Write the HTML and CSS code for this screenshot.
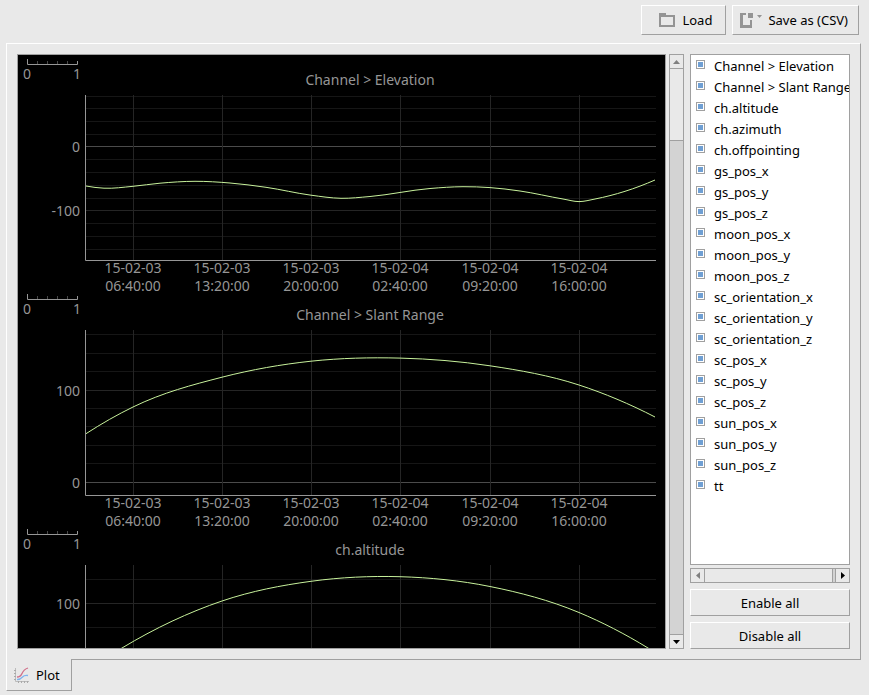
FILE: index.html
```html
<!DOCTYPE html>
<html lang="en">
<head>
  <meta charset="UTF-8">
  <title>Plot</title>
  <link rel="stylesheet" href="styles.css">
</head>
<body>

  <div class="toolbar">
    <button class="btn" type="button">
      <svg class="icon" width="16" height="16" viewBox="0 0 16 16">
        <path d="M0 1h7v2h9v12H0zM2 5v8h12V5z" fill="#949494" fill-rule="evenodd"/>
      </svg>
      Load
    </button>
    <button class="btn btn-save" type="button">
      <svg class="icon" width="22" height="16" viewBox="0 0 22 16">
        <path d="M0 1h6v2H3v10h7V8h2v8H0z" fill="#949494"/>
        <path d="M8 1h5v5H8z" fill="#949494"/>
        <path d="M17 3h5l-2.500 3z" fill="#949494"/>
      </svg>
      Save as (CSV)
    </button>
  </div>

  <div class="panel">
    <div class="plots" id="plots"></div>

    <div class="scroll scroll-v">
      <button class="arrow" type="button" aria-label="Scroll up"><svg width="7" height="4" viewBox="0 0 7 4"><path d="M0 4L3.500 0L7 4z" fill="#808080"/></svg></button>
      <div class="thumb"></div>
      <button class="arrow" type="button" aria-label="Scroll down"><svg width="7" height="4" viewBox="0 0 7 4"><path d="M0 0h7L3.500 4z" fill="#000"/></svg></button>
    </div>

    <div class="side">
      <div class="channels">
        <label class="channel"><input type="checkbox" checked>Channel &gt; Elevation</label>
        <label class="channel"><input type="checkbox" checked>Channel &gt; Slant Range</label>
        <label class="channel"><input type="checkbox" checked>ch.altitude</label>
        <label class="channel"><input type="checkbox" checked>ch.azimuth</label>
        <label class="channel"><input type="checkbox" checked>ch.offpointing</label>
        <label class="channel"><input type="checkbox" checked>gs_pos_x</label>
        <label class="channel"><input type="checkbox" checked>gs_pos_y</label>
        <label class="channel"><input type="checkbox" checked>gs_pos_z</label>
        <label class="channel"><input type="checkbox" checked>moon_pos_x</label>
        <label class="channel"><input type="checkbox" checked>moon_pos_y</label>
        <label class="channel"><input type="checkbox" checked>moon_pos_z</label>
        <label class="channel"><input type="checkbox" checked>sc_orientation_x</label>
        <label class="channel"><input type="checkbox" checked>sc_orientation_y</label>
        <label class="channel"><input type="checkbox" checked>sc_orientation_z</label>
        <label class="channel"><input type="checkbox" checked>sc_pos_x</label>
        <label class="channel"><input type="checkbox" checked>sc_pos_y</label>
        <label class="channel"><input type="checkbox" checked>sc_pos_z</label>
        <label class="channel"><input type="checkbox" checked>sun_pos_x</label>
        <label class="channel"><input type="checkbox" checked>sun_pos_y</label>
        <label class="channel"><input type="checkbox" checked>sun_pos_z</label>
        <label class="channel"><input type="checkbox" checked>tt</label>
      </div>
      <div class="scroll scroll-h">
        <button class="arrow" type="button" aria-label="Scroll left"><svg width="4" height="7" viewBox="0 0 4 7"><path d="M4 0v7L0 3.500z" fill="#808080"/></svg></button>
        <div class="thumb"></div>
        <button class="arrow" type="button" aria-label="Scroll right"><svg width="4" height="7" viewBox="0 0 4 7"><path d="M0 0v7l4-3.500z" fill="#000"/></svg></button>
      </div>
      <button class="btn btn-all" type="button" id="enableAll">Enable all</button>
      <button class="btn btn-all" type="button" id="disableAll">Disable all</button>
    </div>
  </div>

  <div class="tabs">
    <button class="tab" type="button">
      <svg width="16" height="16" viewBox="0 0 16 16" fill="none">
        <path d="M1.500 1v13.500H15" stroke="#bbb"/>
        <path d="M0 3.500h2M0 6.500h2M0 9.500h2M0 12.500h2M4.500 14v2M7.500 14v2M10.500 14v2M13.500 14v2" stroke="#aaa"/>
        <path d="M3 10c3 0 4-1 5-3.500s3-4.500 6-5.500" stroke="#d0708a" stroke-width="1.300"/>
        <path d="M3 12.500c3 .2 4-.8 5.500-2.500s3-2 5.500-1.500" stroke="#80b4ee" stroke-width="1.300"/>
      </svg>
      Plot
    </button>
  </div>

  <script src="script.js"></script>
</body>
</html>
```

FILE: styles.css
```css
* { box-sizing: border-box; margin: 0; padding: 0; }
body {
  height: 100vh;
  display: flex;
  flex-direction: column;
  padding: 5px 8px 4px 6px;
  background: #e9e9e9;
  color: #000;
  font-family: "Noto Sans", sans-serif;
  font-size: 13px;
}
button, input {
  font: inherit;
  color: inherit;
}
.toolbar {
  display: flex;
  justify-content: flex-end;
  gap: 6px;
  padding-right: 2px;
  margin-bottom: 8px;
}
.btn {
  display: flex;
  align-items: center;
  justify-content: center;
  gap: 7px;
  height: 30px;
  padding: 0 13px 0 17px;
  background: #e9e9e9;
  border: 1px solid #a0a0a0;
  border-top-color: #fff;
  border-left-color: #fff;
}
.btn-save {
  gap: 6px;
  padding: 0 10px 0 7px;
}
.btn-all {
  height: 27px;
  margin-top: 6px;
  padding: 0;
}
.panel {
  flex: 1;
  min-height: 0;
  display: flex;
  padding: 10px;
  border: 1px solid #a0a0a0;
  border-top-color: #fff;
  border-left-color: #fff;
}

/* plots */
.plots {
  flex: 1;
  min-width: 0;
  overflow: hidden;
  background: #000;
  border: 1px solid #a0a0a0;
}
.chart {
  display: block;
  width: 100%;
  height: auto;
  fill: none;
  stroke-width: 1;
}
.chart text {
  fill: #969696;
  font-size: 14px;
}
.chart .mid { text-anchor: middle; }
.chart .end { text-anchor: end; }
.axis { stroke: #969696; }
.tick { stroke: #484848; }
.minor { stroke: #161616; }
.major { stroke: #252525; }
.zero { stroke: #4b4b4b; }
.curve { stroke: #c8f29c; }

/* scrollbars */
.scroll {
  display: flex;
  background: #d3d3d3;
  border: 1px solid #a0a0a0;
}
.scroll-v {
  flex-direction: column;
  justify-content: space-between;
  width: 15px;
  margin: 0 6px 0 3px;
}
.scroll-h {
  height: 15px;
  margin-top: 3px;
}
.arrow {
  flex: none;
  width: 13px;
  height: 13px;
  display: flex;
  align-items: center;
  justify-content: center;
  background: #e9e9e9;
  border: 0;
}
.thumb {
  background: #e9e9e9;
  border: 0 solid #a0a0a0;
}
.scroll-v .thumb {
  height: 73px;
  margin-bottom: auto;
  border-width: 1px 0;
}
.scroll-v .arrow:last-child { border-top: 1px solid #a0a0a0; height: 14px; }
.scroll-h .thumb {
  flex: 1;
  margin-right: 2px;
  border-width: 0 1px;
}
.scroll-h .arrow:last-child { border-left: 1px solid #a0a0a0; width: 14px; }

/* channel list */
.side {
  width: 160px;
  display: flex;
  flex-direction: column;
}
.channels {
  flex: 1;
  min-height: 0;
  overflow: hidden;
  background: #fff;
  border: 1px solid #a0a0a0;
}
.channel {
  display: flex;
  gap: 9px;
  height: 21px;
  padding-left: 5px;
  line-height: 22px;
  white-space: nowrap;
}
.channel input {
  appearance: none;
  flex: none;
  width: 9px;
  height: 9px;
  margin-top: 5px;
  background: #fff;
  border: 1px solid #a0a0a0;
}
.channel input:checked {
  padding: 1px;
  background: #6f9fd3 content-box;
}

/* bottom tabs */
.tabs {
  display: flex;
  margin-top: -1px;
}
.tab {
  position: relative;
  display: flex;
  align-items: center;
  gap: 6px;
  height: 32px;
  padding: 0 11px 0 7px;
  background: #e9e9e9;
  border: 1px solid #a0a0a0;
  border-top: 0;
  border-left-color: #fff;
}
```

FILE: script.js
```js
const xTicks = [
  [115.5, '15-02-03', '06:40:00'],
  [204.5, '15-02-03', '13:20:00'],
  [293.5, '15-02-03', '20:00:00'],
  [382.5, '15-02-04', '02:40:00'],
  [472.5, '15-02-04', '09:20:00'],
  [561.5, '15-02-04', '16:00:00']
];

const charts = [
  {
    title: 'Channel > Elevation',
    minor: [41, 53, 66, 79, 104, 117, 130, 143, 168, 181, 194],
    major: [155],
    zero: 91,
    times: true,
    labels: [[91, '0'], [155, '-100']],
    points: [[68, 131], [86, 133.2], [115, 131.3], [142, 128.2], [177, 126.3], [212, 128], [248, 132.3], [293, 140.2], [323, 143.3], [352, 141.5], [412, 133.5], [445, 131.7], [472, 132.6], [502, 136], [545, 144], [561, 146.6], [577, 144], [637, 125]]
  },
  {
    title: 'Channel > Slant Range',
    minor: [44, 63, 81, 118, 136, 155, 173],
    major: [100],
    zero: 192,
    times: true,
    labels: [[100, '100'], [192, '0']],
    points: [[68, 143.7], [115, 117], [204, 87.2], [293, 71.2], [382, 68.1], [472, 75.8], [561, 95], [637, 127]]
  },
  {
    title: 'ch.altitude',
    minor: [54, 102],
    major: [78],
    zero: null,
    times: false,
    labels: [[78, '100']],
    points: [[104, 123], [204, 76], [293, 56.3], [382, 51.7], [472, 61.5], [561, 87.5], [630, 123]]
  }
];

// smooth line through the points
function curve(p) {
  const n = p.length - 1;
  const slope = i => (p[i + 1][1] - p[i][1]) / (p[i + 1][0] - p[i][0]);
  const m = p.map((_, i) => {
    if (i === 0 || i === n) return 0;
    const h0 = p[i][0] - p[i - 1][0], h1 = p[i + 1][0] - p[i][0];
    return (slope(i - 1) * h1 + slope(i) * h0) / (h0 + h1);
  });
  m[0] = 2 * slope(0) - m[1];
  m[n] = 2 * slope(n - 1) - m[n - 1];

  // run straight on past both ends, the plot edges cut it off
  let d = 'M' + [p[0][0] - 20, p[0][1] - m[0] * 20] + 'L' + p[0];
  for (let i = 0; i < n; i++) {
    const [x0, y0] = p[i], [x1, y1] = p[i + 1];
    const h = (x1 - x0) / 3;
    d += ' C' + [x0 + h, y0 + m[i] * h, x1 - h, y1 - m[i + 1] * h, x1, y1];
  }
  return d + 'L' + [p[n][0] + 20, p[n][1] + m[n] * 20];
}

function hline(y, cls) {
  return `<path class="${cls}" d="M68 ${y + 0.5}H638"/>`;
}

function draw(c) {
  let s = '';
  // small scale in the corner
  s += '<path class="tick" d="M19.500 6v3M29.500 6v3M39.500 6v3M49.500 6v3"/>';
  s += '<path class="axis" d="M9.500 4v5.500H59.500V6"/>';
  s += '<text class="mid" x="9" y="24">0</text><text class="mid" x="59" y="24">1</text>';
  s += `<text class="mid" x="352" y="30">${c.title.replace('>', '&gt;')}</text>`;

  c.minor.forEach(y => s += hline(y, 'minor'));
  c.major.forEach(y => s += hline(y, 'major'));
  if (c.zero !== null) s += hline(c.zero, 'zero');

  xTicks.forEach(([x, date, time]) => {
    s += `<path class="major" d="M${x} 40V205"/>`;
    if (!c.times) return;
    s += `<text class="mid" x="${x - 0.5}" y="218">${date}</text>`;
    s += `<text class="mid" x="${x - 0.5}" y="236">${time}</text>`;
  });
  c.labels.forEach(([y, t]) => s += `<text class="end" x="62" y="${y + 6}">${t}</text>`);

  s += '<path class="axis" d="M67.500 40V205.500H638"/>';
  s += `<path class="curve" clip-path="url(#plotArea)" d="${curve(c.points)}"/>`;
  return s;
}

// all charts share one drawing, 235 units apart
let content = '<clipPath id="plotArea"><path d="M68 40H637V205H68z"/></clipPath>';
charts.forEach((c, i) => {
  content += `<g transform="translate(0 ${i * 235})">${draw(c)}</g>`;
});
document.getElementById('plots').innerHTML =
  `<svg class="chart" viewBox="0 0 647 593">${content}</svg>`;

function setAll(on) {
  document.querySelectorAll('.channel input').forEach(box => box.checked = on);
}
document.getElementById('enableAll').addEventListener('click', () => setAll(true));
document.getElementById('disableAll').addEventListener('click', () => setAll(false));
```
